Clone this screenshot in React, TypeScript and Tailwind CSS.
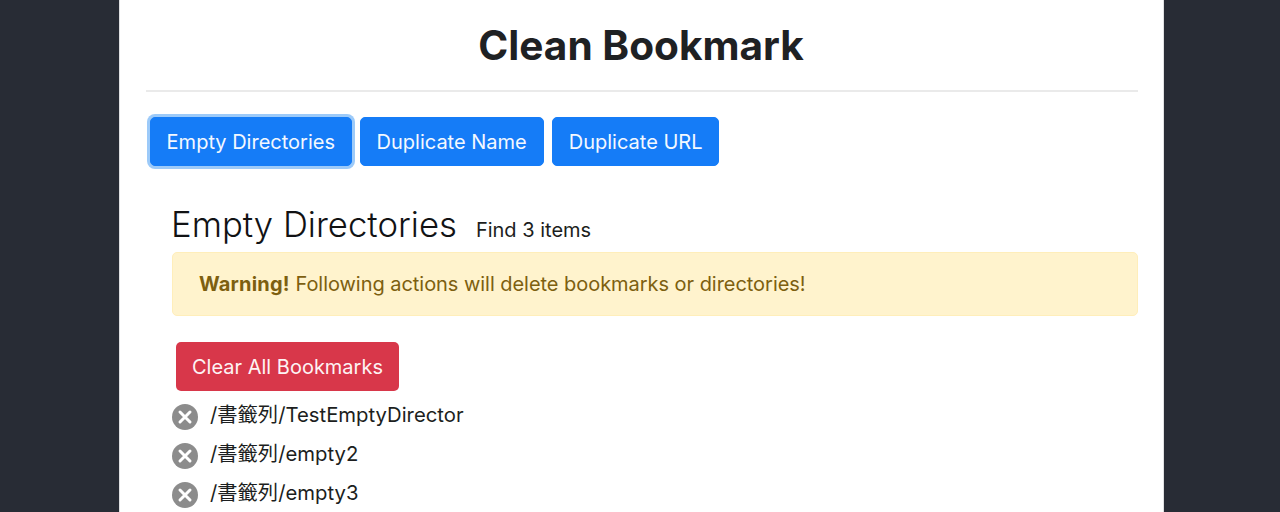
const font = "font-['Inter','Noto_Sans_CJK_TC',sans-serif]";

const items = ["/書籤列/TestEmptyDirector", "/書籤列/empty2", "/書籤列/empty3"];

function RemoveIcon() {
  return (
    <svg width="26" height="26" viewBox="0 0 26 26" className="shrink-0">
      <circle cx="13" cy="13" r="13" fill="#8c8c8c" />
      <path d="M8 8L18 18M18 8L8 18" stroke="#fff" strokeWidth="3" strokeLinecap="round" />
    </svg>
  );
}

function TabButton({ label, focused }: { label: string; focused?: boolean }) {
  return (
    <button
      type="button"
      className={
        focused
          ? "h-[49px] rounded-[5px] border border-[#157cf7] bg-[#157cf7] px-[15.6px] text-[20px] text-[#f3f8ff] ring-[3px] ring-[#9ccaf9]"
          : "h-[49px] rounded-[5px] border border-[#157cf7] bg-[#157cf7] px-[16px] text-[20px] text-[#f3f8ff]"
      }
    >
      {label}
    </button>
  );
}

export default function App() {
  return (
    <div className={`h-[512px] overflow-hidden bg-[#282c35] ${font}`}>
      <div className="ml-[119px] h-full w-[1045px] border-x border-[#dfe0e2] bg-white pr-[25px] pl-[26px]">
        <h1 className="pt-[21px] pr-[2px] text-center text-[40.6px] leading-[49px] font-bold text-[#1f2123]">
          Clean Bookmark
        </h1>
        <hr className="mt-[20px] border-t-2 border-[#eaeaea]" />

        <div className="mt-[25px] flex gap-[8px] pl-[4px]">
          <TabButton label="Empty Directories" focused />
          <TabButton label="Duplicate Name" />
          <TabButton label="Duplicate URL" />
        </div>

        <div className="pl-[26px]">
          <div className="mt-[33px] flex items-baseline">
            <h2 className="-ml-[1px] text-[34.7px] leading-[50px] font-light text-[#111214]">Empty Directories</h2>
            <span className="ml-[19px] text-[20px] text-[#1c1e20]">Find 3 items</span>
          </div>

          <div className="mt-[3px] h-[64px] rounded-[5px] border border-[#ffeeba] bg-[#fff3cd] pl-[26px] text-[20px] leading-[62px] tracking-[-0.04px] text-[#7d5f10]">
            <strong className="font-bold tracking-[0.2px]">Warning!</strong> Following actions will delete bookmarks or directories!
          </div>

          <button
            type="button"
            className="mt-[26px] ml-[4px] block h-[49px] rounded-[5px] bg-[#d8374a] px-[16px] text-[20px] text-[#fdf3f4]"
          >
            Clear All Bookmarks
          </button>

          <ul className="mt-[6px] text-[20.3px] text-[#1c1e20]">
            {items.map((item) => (
              <li key={item} className="flex h-[39px] items-center gap-[12px]">
                <RemoveIcon />
                <span className="relative -top-[1px]">{item}</span>
              </li>
            ))}
          </ul>
        </div>
      </div>
    </div>
  );
}
